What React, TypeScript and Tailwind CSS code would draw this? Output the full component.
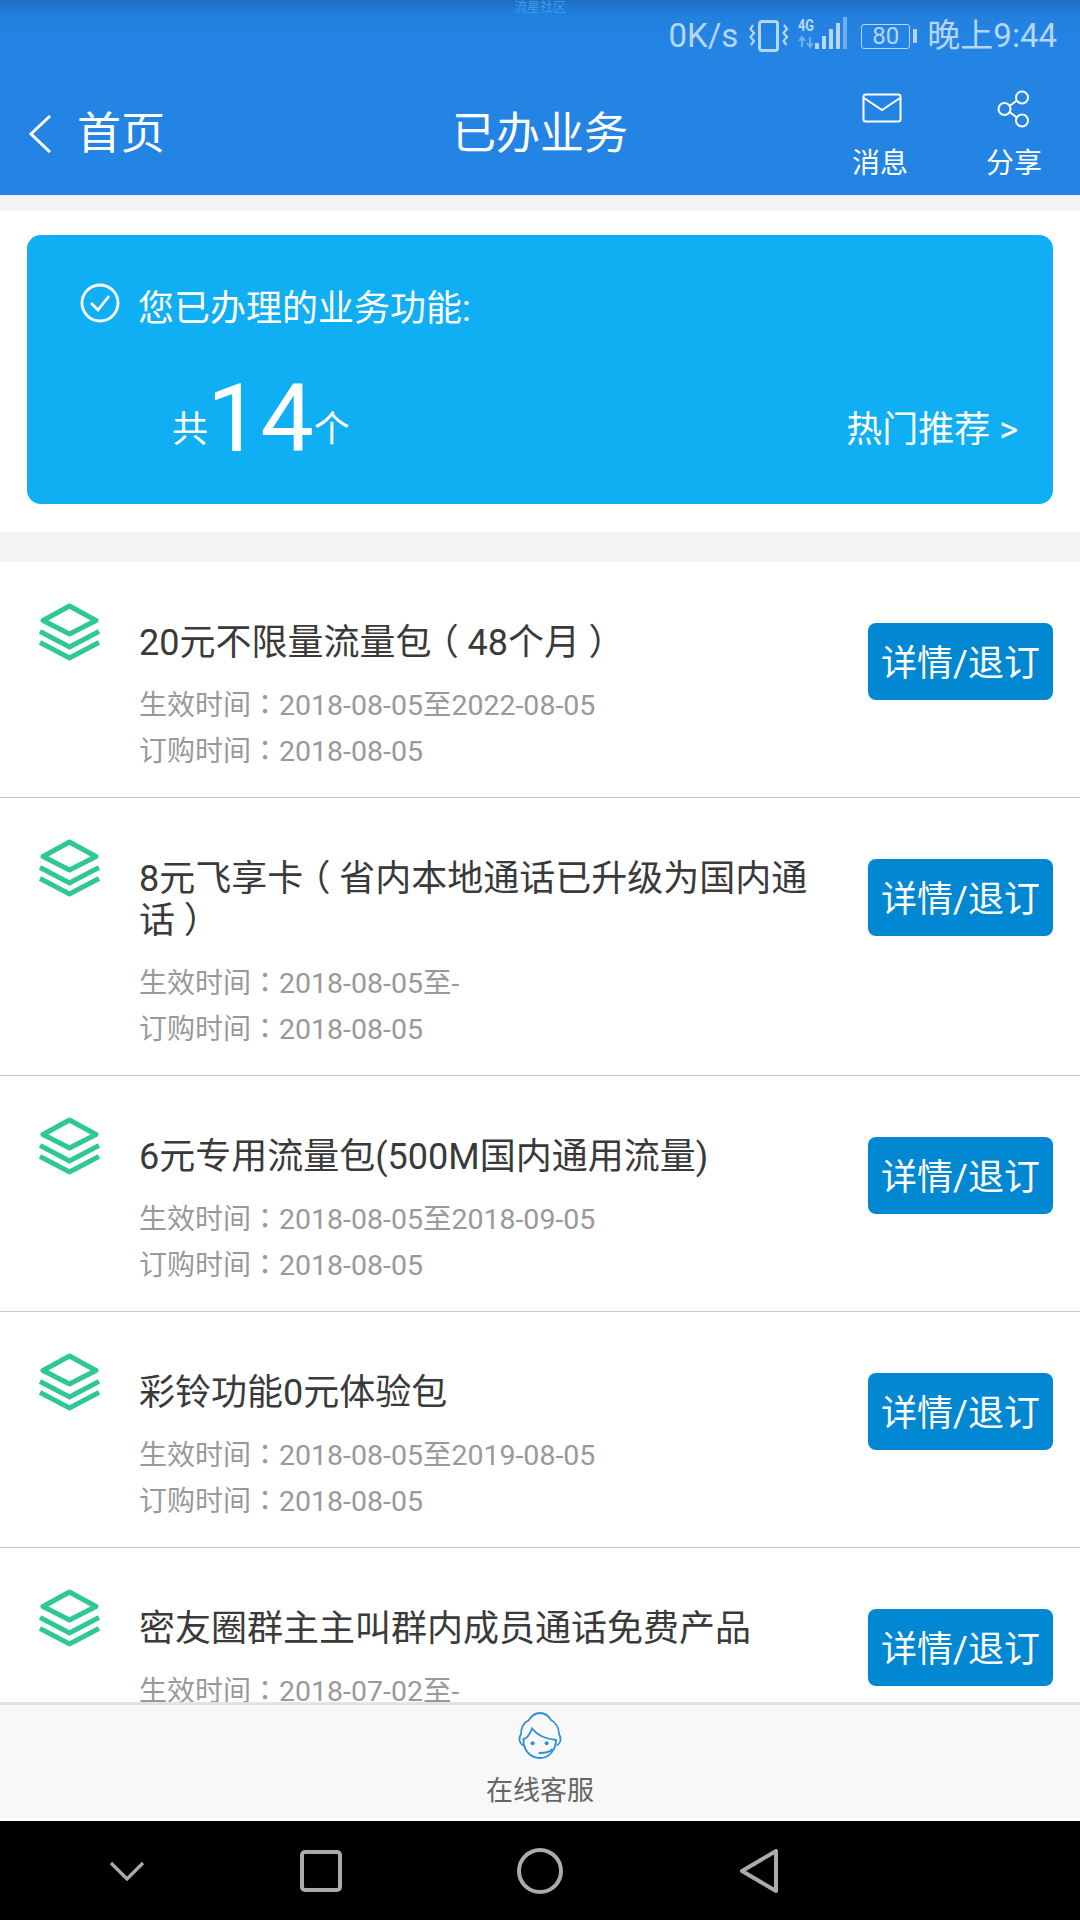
import { Fragment } from 'react';

const font = 'font-["Roboto","Noto_Sans_CJK_SC",sans-serif]';

const services = [
  { name: '20元不限量流量包（48个月）', valid: '2018-08-05至2022-08-05', ordered: '2018-08-05' },
  { name: '8元飞享卡（省内本地通话已升级为国内通话）', valid: '2018-08-05至-', ordered: '2018-08-05' },
  { name: '6元专用流量包(500M国内通用流量)', valid: '2018-08-05至2018-09-05', ordered: '2018-08-05' },
  { name: '彩铃功能0元体验包', valid: '2018-08-05至2019-08-05', ordered: '2018-08-05' },
  { name: '密友圈群主主叫群内成员通话免费产品', valid: '2018-07-02至-', ordered: '2018-07-02' },
];

// full-width brackets sit centred in their cell in the reference
function Title({ text }: { text: string }) {
  return (
    <>
      {text.split(/([（）])/).map((part, i) => {
        if (part === '（') return <span key={i} className="inline-block -translate-x-[0.24em]">{part}</span>;
        if (part === '）') return <span key={i} className="inline-block translate-x-[0.24em]">{part}</span>;
        return <Fragment key={i}>{part}</Fragment>;
      })}
    </>
  );
}

function DateLine({ label, value }: { label: string; value: string }) {
  return (
    <div>
      {label}
      <span className='leading-[0] font-["Noto_Sans_CJK_TC",sans-serif]'>：</span>
      <span className="text-[28.5px]">{value}</span>
    </div>
  );
}

function StackIcon() {
  return (
    <svg width="61" height="58" viewBox="0 0 61 58" fill="none" stroke="#2fc795" strokeWidth="5" className="shrink-0 blur-[0.5px]">
      <path d="M30.5 3 L57 17.5 L30.5 31 L4 17.5 Z" strokeLinejoin="round" />
      <path d="M1 28.5 L30.5 44 L60 28.5" />
      <path d="M1 39.5 L30.5 55 L60 39.5" />
    </svg>
  );
}

function AgentIcon() {
  return (
    <svg width="44" height="47" viewBox="0 0 44 47" fill="none" stroke="#2b8fd6" strokeWidth="1.8" strokeLinecap="round">
      <path d="M4.5 33 C1 31 0.5 26 3 22 C3 14 7 10 11 8 C14 3 18 1 22 1 C26 1 30 3 33 8 C37 10 41 15 41 22 C43.5 26 43 31 39.5 33" />
      <path d="M5.5 27 C8 27 12 23 14 16.5 C19 23 28 27 38 28" />
      <path d="M5.5 27 C5 38 12 46 22 46 C31 46 38 38 38 28" />
      <path d="M21.5 41 C26 41 31 40.5 34 37.5" />
      <circle cx="14.6" cy="31.3" r="2" fill="#2b8fd6" stroke="none" />
      <circle cx="28.6" cy="31.3" r="2" fill="#2b8fd6" stroke="none" />
    </svg>
  );
}

function StatusIcons() {
  return (
    <>
      <svg width="40" height="32" viewBox="0 0 40 32" fill="none" stroke="#b6d6f6" className="ml-[11px]">
        <rect x="10.5" y="1.5" width="18" height="29" rx="2.5" strokeWidth="3" />
        <path d="M4 5 L1.5 9 L5 13 L1.5 17 L5 21 L2 25" strokeWidth="2.2" />
        <path d="M35 5 L38 9 L34.5 13 L38 17 L34.5 21 L37.5 25" strokeWidth="2.2" />
      </svg>
      <svg width="50" height="34" viewBox="0 0 50 34" className="ml-[9px] -mt-[4px]">
        <text x="0" y="14" fontSize="17" fontWeight="700" fill="#b6d6f6" fontFamily="Roboto, sans-serif" textLength="16" lengthAdjust="spacingAndGlyphs">4G</text>
        <path d="M4 20 L4 30 M1 24 L4 20 L7 24 M12 20 L12 30 M9 26 L12 30 L15 26" stroke="#6fafee" strokeWidth="2" fill="none" />
        <rect x="17" y="26" width="4" height="6" fill="#b6d6f6" />
        <rect x="24" y="19" width="4" height="13" fill="#b6d6f6" />
        <rect x="31" y="12" width="4" height="20" fill="#b6d6f6" />
        <rect x="38" y="6" width="4" height="26" fill="#b6d6f6" />
        <rect x="45" y="0" width="4" height="32" fill="#6fafee" />
      </svg>
      <div className="ml-[13px] flex items-center">
        <div className="w-[49px] h-[25px] rounded-[3px] border border-[#b6d6f6] flex items-center justify-center text-[24px] leading-none text-[#b6d6f6]">80</div>
        <div className="ml-[3px] w-[4px] h-[14px] rounded-[1px] bg-[#b6d6f6]" />
      </div>
    </>
  );
}

export default function App() {
  return (
    <div className={`w-[1080px] h-[1920px] overflow-hidden flex flex-col bg-white ${font}`}>
      {/* header */}
      <header className="h-[195px] shrink-0 relative bg-[linear-gradient(#1f6dc0,#2280dd_14px,#2484e4_40px)] text-white">
        <div className="absolute top-0 left-[514px] text-[13px] leading-[14px] text-[#3d9cec]">流星社区</div>
        <div className="h-[70px] pt-[2px] flex items-center justify-end pr-[23px] text-[#b6d6f6] text-[33px]">
          <span>0K/s</span>
          <StatusIcons />
          <span className="ml-[10px]">晚上9:44</span>
        </div>
        <div className="h-[125px] relative flex items-start justify-between">
          <div className="flex items-center pl-[28px] pt-[39px]">
            <svg width="24" height="38" viewBox="0 0 24 38" fill="none" stroke="white" strokeWidth="3">
              <path d="M22 1 L3 19 L22 37" />
            </svg>
            <span className="ml-[25px] text-[44px] leading-[50px]">首页</span>
          </div>
          <div className="absolute left-0 right-0 top-[39px] text-center text-[44px] leading-[50px]">已办业务</div>
          <div className="flex pr-[38px] pt-[23px] gap-[78px]">
            <div className="flex flex-col items-center w-[56px]">
              <svg width="40" height="30" viewBox="0 0 40 30" fill="none" stroke="white" strokeWidth="2" className="ml-[4px]">
                <rect x="1.5" y="1.5" width="37" height="27" rx="2" />
                <path d="M2 5 L20 17 L38 5" />
              </svg>
              <span className="mt-[24px] text-[28px] leading-[34px]">消息</span>
            </div>
            <div className="flex flex-col items-center w-[56px]">
              <svg width="34" height="38" viewBox="0 0 34 38" fill="none" stroke="white" strokeWidth="2" className="-mt-[3px]">
                <circle cx="25" cy="7.5" r="6" />
                <circle cx="7.5" cy="19" r="6" />
                <circle cx="25" cy="30.5" r="6" />
                <path d="M12.5 16 L20 10.5 M12.5 22 L20 27.5" />
              </svg>
              <span className="mt-[19px] text-[28px] leading-[34px]">分享</span>
            </div>
          </div>
        </div>
      </header>

      <div className="h-[16px] shrink-0 bg-[#f4f4f4]" />

      {/* summary card */}
      <div className="shrink-0 px-[27px] pt-[24px] pb-[28px]">
        <div className="h-[269px] rounded-[14px] bg-[#10aef2] text-white pl-[53px] pr-[35px] pt-[48px] flex flex-col">
          <div className="flex items-start">
            <svg width="40" height="40" viewBox="0 0 40 40" fill="none" stroke="white" className="shrink-0">
              <circle cx="20" cy="20" r="18" strokeWidth="2.8" />
              <path d="M11 20 L18 27 L29 13" strokeWidth="2.8" />
            </svg>
            <span className="ml-[18px] mt-[3px] text-[36px] leading-[46px]">您已办理的业务功能:</span>
          </div>
          <div className="flex items-end justify-between pl-[92px] mt-[32px]">
            <div className="flex items-end">
              <span className="mb-[21px] text-[36px] leading-[46px]">共</span>
              <span className="-ml-[1px] text-[95px] leading-[110px]">14</span>
              <span className="mb-[21px] text-[36px] leading-[46px]">个</span>
            </div>
            <span className="mb-[21px] text-[36px] leading-[46px]">热门推荐 &gt;</span>
          </div>
        </div>
      </div>

      <div className="h-[30px] shrink-0 bg-[#f4f4f4]" />

      {/* service list */}
      <div className="flex-1 min-h-0 overflow-hidden">
        {services.map((s) => (
          <div key={s.name} className="flex items-start border-b border-[#c6c6c6] pl-[39px] pr-[27px] pt-[41px] pb-[22px]">
            <StackIcon />
            <div className="ml-[39px] flex-1 pr-[48px] pt-[19px]">
              <div className="text-[36px] leading-[42px] text-[#3a3a3a]"><Title text={s.name} /></div>
              <div className="mt-[19px] text-[28px] leading-[46px] text-[#999]">
                <DateLine label="生效时间" value={s.valid} />
                <DateLine label="订购时间" value={s.ordered} />
              </div>
            </div>
            <button className="w-[185px] h-[77px] shrink-0 mt-[20px] pt-[4px] rounded-[8px] bg-[#0287d3] text-white text-[36px]">详情/退订</button>
          </div>
        ))}
      </div>

      {/* bottom bar */}
      <div className="h-[119px] shrink-0 border-t-[3px] border-[#e3e3e3] bg-white">
        <div className="h-[113px] bg-[#f8f8f8] flex flex-col items-center pt-[7px]">
          <AgentIcon />
          <span className="mt-[13px] text-[27px] leading-[38px] text-[#666]">在线客服</span>
        </div>
      </div>

      {/* system nav */}
      <div className="h-[99px] shrink-0 bg-black flex items-center">
        <div className="w-[1080px] grid grid-cols-[254px_137px_300px_1fr] items-center text-[#ababab]">
          <svg width="36" height="20" viewBox="0 0 36 20" fill="none" stroke="currentColor" strokeWidth="3.2" className="ml-[109px]">
            <path d="M2 2 L18 18 L34 2" />
          </svg>
          <svg width="42" height="42" viewBox="0 0 42 42" fill="none" stroke="currentColor" strokeWidth="4" className="ml-[46px]">
            <rect x="2" y="2" width="38" height="38" rx="3" />
          </svg>
          <svg width="46" height="46" viewBox="0 0 46 46" fill="none" stroke="currentColor" strokeWidth="4" className="ml-[126px]">
            <circle cx="23" cy="23" r="21" />
          </svg>
          <svg width="40" height="46" viewBox="0 0 40 46" fill="none" stroke="currentColor" strokeWidth="4" strokeLinejoin="round" className="ml-[48px]">
            <path d="M37 3 L37 43 L3 23 Z" />
          </svg>
        </div>
      </div>
    </div>
  );
}
